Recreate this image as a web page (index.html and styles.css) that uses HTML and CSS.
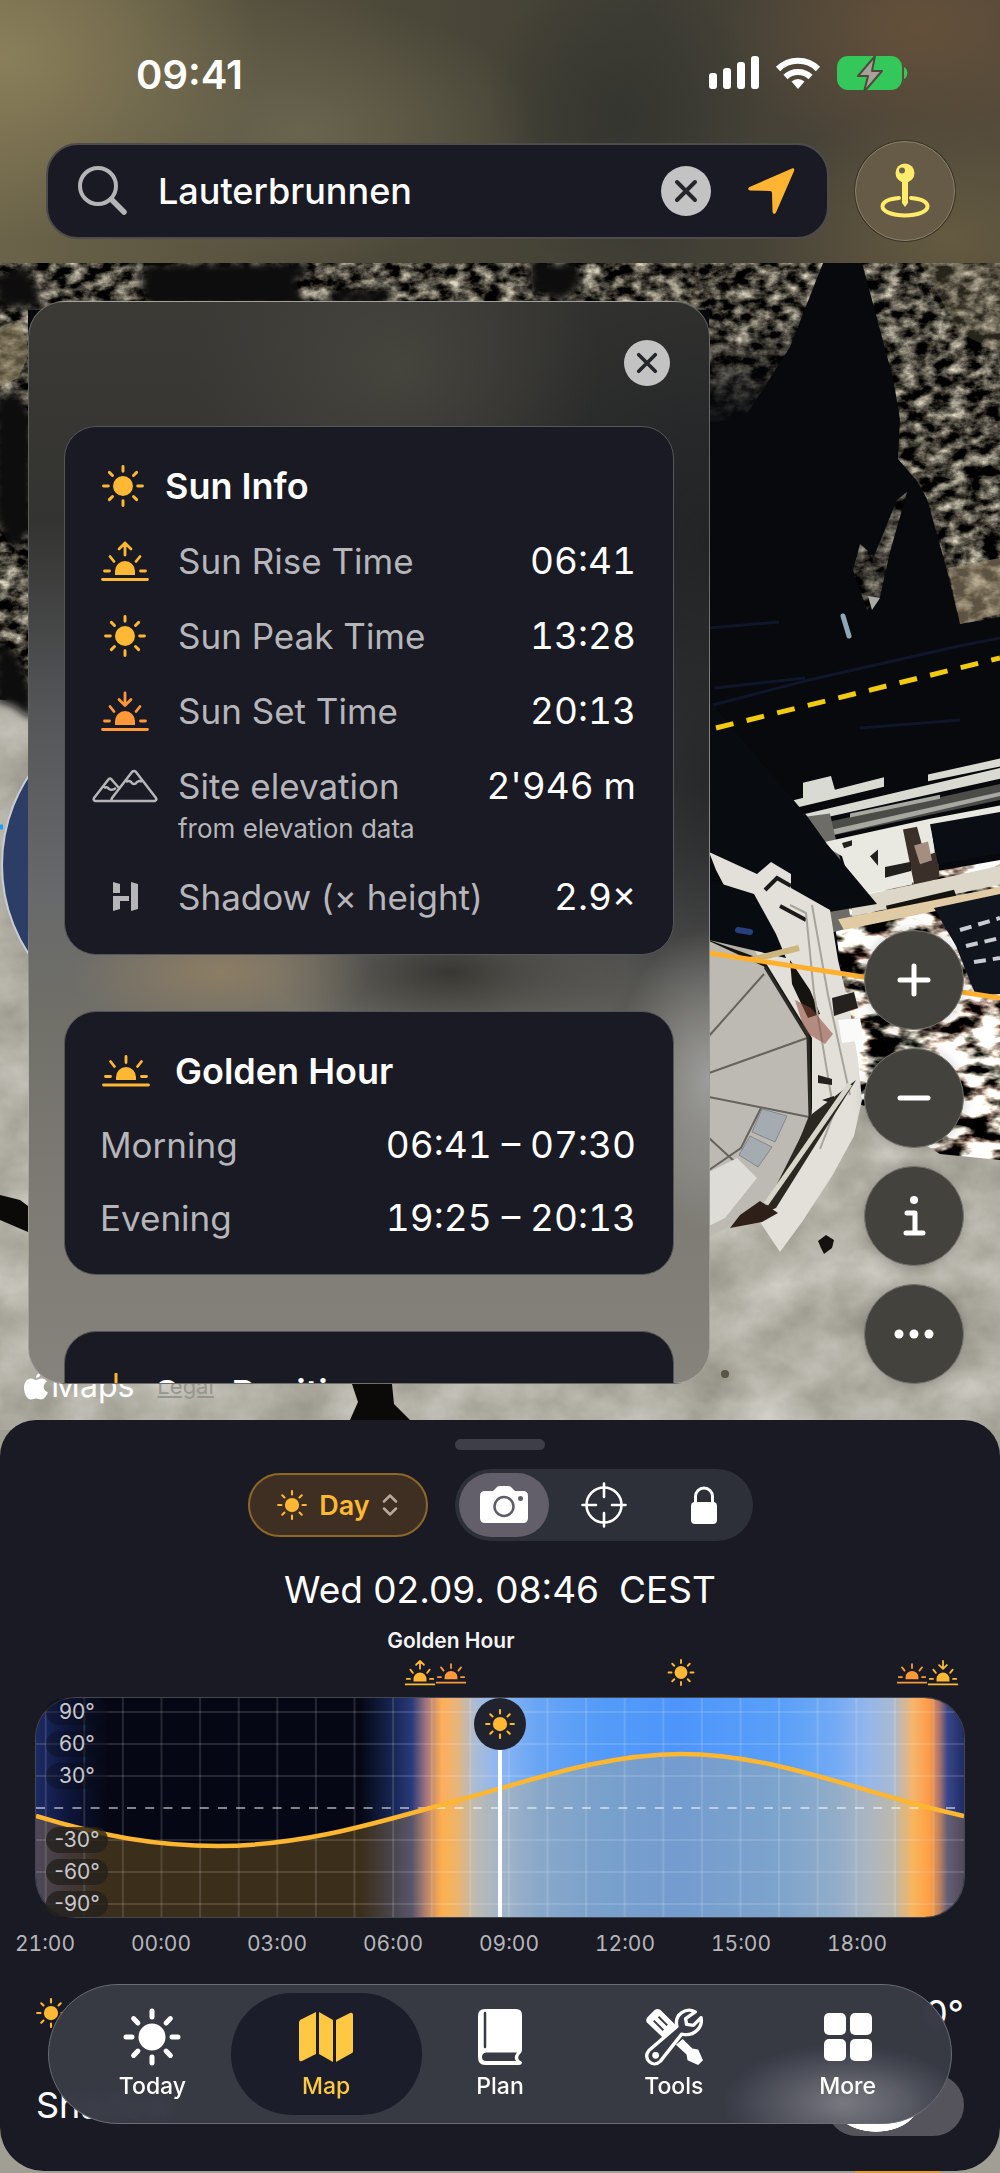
FILE: index.html
```html
<!DOCTYPE html>
<html lang="en">
<head>
    <meta charset="UTF-8">
    <meta name="viewport" content="width=device-width, initial-scale=1.0">
    <title>Sun Map</title>
    <link rel="stylesheet" href="styles.css">
</head>
<body>

    <!-- shared icons -->
    <svg class="defs" aria-hidden="true">
        <symbol id="sun" viewBox="0 0 40 40">
            <circle cx="20" cy="20" r="9.5" fill="currentColor"/>
            <path d="M20 1.5v4.5M20 34v4.5M1.5 20H6M34 20h4.5M7 7l3 3M30 30l3 3M33 7l-3 3M10 30l-3 3" stroke="currentColor" stroke-width="2.8" stroke-linecap="round"/>
        </symbol>
        <symbol id="golden" viewBox="0 0 48 32">
            <path d="M14 25v-3a10 10 0 0 1 20 0v3z" fill="currentColor"/>
            <path d="M1.5 30h45M24 1.5v6M8.5 6.5l4 5M39.5 6.5l-4 5M3.5 21.5h5M39.5 21.5h5" fill="none" stroke="currentColor" stroke-width="2.8" stroke-linecap="round"/>
        </symbol>
        <symbol id="sunrise" viewBox="0 0 48 40">
            <path d="M14 34v-4a10 10 0 0 1 20 0v4z" fill="currentColor"/>
            <path d="M1.5 38.5h45M24 14V2M18 8l6-6 6 6M9 15.5l4 5M39 15.5l-4 5M3.5 30h5M39.5 30h5" fill="none" stroke="currentColor" stroke-width="2.8" stroke-linecap="round" stroke-linejoin="round"/>
        </symbol>
        <symbol id="sunset" viewBox="0 0 48 40">
            <path d="M14 34v-4a10 10 0 0 1 20 0v4z" fill="currentColor"/>
            <path d="M1.5 38.5h45M24 2v12M18 8.5l6 6 6-6M9 15.5l4 5M39 15.5l-4 5M3.5 30h5M39.5 30h5" fill="none" stroke="currentColor" stroke-width="2.8" stroke-linecap="round" stroke-linejoin="round"/>
        </symbol>
    </svg>

    <div class="screen">

        <!-- satellite map -->
        <svg class="map" viewBox="0 0 1000 2173" preserveAspectRatio="xMidYMin slice" aria-hidden="true">
            <defs>
                <filter id="darkRock" x="0" y="0" width="100%" height="100%" color-interpolation-filters="sRGB">
                    <feTurbulence type="fractalNoise" baseFrequency="0.06 0.09" numOctaves="5" seed="4"/>
                    <feColorMatrix values="1.7 0 0 0 -0.57  1.65 0 0 0 -0.56  1.5 0 0 0 -0.52  0 0 0 0 1"/>
                    <feComposite in2="SourceGraphic" operator="in"/>
                </filter>
                <filter id="paleRock" x="0" y="0" width="100%" height="100%" color-interpolation-filters="sRGB">
                    <feTurbulence type="fractalNoise" baseFrequency="0.015 0.02" numOctaves="5" seed="9"/>
                    <feColorMatrix values="0.28 0 0 0 0.56  0.28 0 0 0 0.55  0.3 0 0 0 0.5  0 0 0 0 1"/>
                    <feComposite in2="SourceGraphic" operator="in"/>
                </filter>
                <filter id="debris" x="0" y="0" width="100%" height="100%" color-interpolation-filters="sRGB">
                    <feTurbulence type="fractalNoise" baseFrequency="0.03 0.06" numOctaves="4" seed="21"/>
                    <feColorMatrix values="5 0 0 0 -1.8  4.8 0.2 0 0 -1.85  4.6 0.2 0 0 -1.8  0 0 0 0 1"/>
                    <feComposite in2="SourceGraphic" operator="in"/>
                </filter>
                <filter id="soft" x="-20%" y="-20%" width="140%" height="140%"><feGaussianBlur stdDeviation="4"/></filter>
                <linearGradient id="fade" x1="0" y1="0" x2="0" y2="1"><stop offset="0" stop-color="#07090d" stop-opacity="0"/><stop offset="1" stop-color="#07090d"/></linearGradient>
            </defs>
            <rect width="1000" height="2173" fill="#a19f93"/>
            <rect y="690" width="1000" height="740" filter="url(#paleRock)"/>
            <path d="M0 263H1000V1040L860 1010 709 900V700H0z" fill="#07090d"/>
            <path d="M0 263H823l-33 84-43 67-38 10V310H28V700H0z" filter="url(#darkRock)"/>
            <path d="M709 320H830L790 430H709z" fill="url(#fade)"/>
            <g fill="#090b0f" filter="url(#soft)">
                <path d="M-5 275l30-8 12 20 6 20H-5zM145 263h170l-20 20 15 24H150l-10-20zM330 290h60v14h-60zM530 263h46l6 20-20 18-30-10zM-5 400l22-10 16 30v110l-20 20-18-30zM-5 640l20 10 18 40v30l-20-14-18-6z"/>
            </g>
            <path d="M0 330l20-8 10 30-12 26-18 8z" fill="#8d8060" opacity=".6"/>
            <path d="M862 263H1000V617l-40 7-13-54-20-71-10-18-19-22 2-40-7-41z" filter="url(#darkRock)"/>
            <path d="M897 500l10-8-17 60-10 45-13 13-14-40 7-26 14 12z" filter="url(#darkRock)" opacity=".8"/>
            <path d="M868 596l12 2-8 12z" fill="#a9aaa5"/>
            <path d="M948 568l52-10v56l-40 10z" fill="#a79878" opacity=".55"/>
            <path d="M920 263h80v90l-40-20z" fill="#9a8f70" opacity=".25"/>
            <path d="M0 1195l20 5 8 6v26l-28-12zM352 1384h40l2 20 16 16h-60l8-18z" fill="#0b0a08"/>
            <circle cx="164" cy="865" r="162" fill="#2c3d66" stroke="#c9ccd4" stroke-width="2"/>
            <path d="M0 827h3" stroke="#18a0ff" stroke-width="5"/>
            <path d="M843 616l6 20" stroke="#8fa6b4" stroke-width="5" stroke-linecap="round"/>
            <path d="M709 628l70-6M709 706l100-26 150-34 41-8M715 688l90-10M860 728l100-8" stroke="#10162a" stroke-width="3" fill="none"/>

            <!-- station buildings -->
            <path d="M830 890l170-30v300l-60-6-80-50z" filter="url(#debris)"/>
            <g transform="translate(0 -81) scale(1 1.339)">
                <path d="M803 645l28-5 6 16-34 5zM768 663l116-22v7L772 668zM928 639l72-12v6l-72 11zM790 671l210-37v8l-205 34z" fill="#d9dbd3"/>
                <path d="M806 678l194-32v12l-190 30z" fill="#4b4b48"/>
                <path d="M820 682l60-10 120-20v3l-178 31zM850 668l90-14v3l-90 14z" fill="#a8a8a2"/>
                <path d="M790 672l40-4 12 40 10 45-20 4-14-30z" fill="#6d6c66"/>
                <path d="M820 690l110-18 70-10v8l-68 12 5 26-25 7v6l-58 9-12-30z" fill="#e9e8e1"/>
                <path d="M903 680l14-2 8 22 14-4v20l-24 8z" fill="#3b2f2a"/>
                <path d="M914 692l14-3 4 14-12 3z" fill="#a58d80"/>
                <path d="M885 708l26-4v7l-26 5zM870 700l8-5v12zM842 690l10-2v4l-8 2z" fill="#22201d"/>
                <path d="M930 676l70-9v31l-62 8z" fill="#0a0d14"/>
                <path d="M852 731l148-24v14l-148 24z" fill="#dcd7c8"/>
                <path d="M886 737l68-12 4 8-70 10z" fill="#15130f"/>
                <path d="M838 747l162-24v8l-156 24z" fill="#e0cba4"/>
            </g>
            <path d="M934 908l66-14v100l-24 2-20-50z" fill="#10141c"/>
            <path d="M960 930l40-12M966 946l34-8M974 962l26-4" stroke="#c9cdd2" stroke-width="4" stroke-dasharray="12 7"/>
            <path d="M709 700v160l48 24 60 30 60-10-50-60-20-28z" fill="#080b10"/>
            <path d="M709 852l48 22 14-12 20 12v14l39 22 8 50 12 50 8 50 4 40-8 36-22 40-30 46-22 30-20-30 40-110-4-80-34-66-22-50-24-46z" fill="#e2e0d9"/>
            <path d="M765 890l12-12 14 8M780 906l26 14" stroke="#1c1a18" stroke-width="4" fill="none"/>
            <path d="M709 880l45 14 22 40 10 24-77-18z" fill="#080b10"/>
            <path d="M738 930l12 2" stroke="#26407c" stroke-width="6" stroke-linecap="round"/>
            <path d="M709 940l55 20 48 78v80l-8-80-50-72-45-20zM790 960l20 30 10 24-12 4-16-34z" fill="#16140f"/>
            <path d="M790 905l16 8 8 80 20 120-14 36M812 905l16 90 22 100" stroke="#a7a49b" stroke-width="2" fill="none"/>
            <path d="M832 998l22-6 4 16-24 8zM818 1075l14 4v6l-14-2zM822 1100l12-4v8z" fill="#24211e"/>
            <path d="M838 1020l22-2 4 22-22 3z" fill="#fafaf8"/>
            <path d="M795 1000l16 8 22 26-8 10-20-12z" fill="#8e4638" opacity=".55"/>
            <path d="M709 970l90-22" stroke="#cdb67c" stroke-width="6"/>

            <!-- dome -->
            <path d="M709 941l56 26 43 70 3 80-33 84-69 36z" fill="#bcbab3"/>
            <path d="M709 1036l55-62M709 1073l98-35M709 1097l100 20M709 1138l26 24M709 1170l32-22 20-40" stroke="#65635c" stroke-width="2" fill="none"/>
            <path d="M765 967l43 70 2 80-33 84" stroke="#2c2a26" stroke-width="3" fill="none"/>
            <path d="M762 1109l25 7-12 26-23-10zM750 1136l22 11-14 20-19-12z" fill="#a4acb2" stroke="#84868a"/>
            <path d="M709 1172l28-14 20 20-32 40-16 8z" fill="#dddcd6"/>
            <path d="M856 1080l-80 128-14 6 50-100z" fill="#2b2822"/>
            <path d="M850 1084l-84 120" stroke="#d8d5ca" stroke-width="5"/>
            <path d="M740 1215l20-14 18 12-16 9-32 6z" fill="#2f1f19"/>
            <path d="M818 1241l8-6 8 5-2 8-8 6-3-6z" fill="#14110f"/>
            <circle cx="725" cy="1374" r="4" fill="#5b5344"/>

            <!-- sun azimuth lines -->
            <path d="M716 728L1000 658" stroke="#f0cb10" stroke-width="5" stroke-dasharray="18 13.5"/>
            <path d="M709 953L1000 998" stroke="#ffb02e" stroke-width="5"/>
            <path d="M855 2172h85" stroke="#e0a031" stroke-width="3"/>
        </svg>

        <header class="topbar">
            <div class="status">
                <span class="clock">09:41</span>
                <div class="status-icons">
                    <svg width="50" height="34" viewBox="0 0 50 34" fill="#fff" aria-hidden="true">
                        <rect x="0" y="17" width="8" height="16" rx="3"/><rect x="14" y="12" width="8" height="21" rx="3"/><rect x="28" y="6" width="8" height="27" rx="3"/><rect x="42" y="0" width="8" height="33" rx="3"/>
                    </svg>
                    <svg width="46" height="34" viewBox="0 0 46 34" aria-hidden="true">
                        <path d="M3 13a28.5 28.5 0 0 1 40 0M10.5 21a18 18 0 0 1 25 0" fill="none" stroke="#fff" stroke-width="6"/>
                        <path d="M23 33l-6.5-7.5a9.5 9.5 0 0 1 13 0z" fill="#fff"/>
                    </svg>
                    <svg width="72" height="36" viewBox="0 0 72 36" aria-hidden="true">
                        <rect width="65" height="34" rx="11" fill="#34c759"/>
                        <path d="M67 11a7 7 0 0 1 0 12z" fill="#34c759"/>
                        <path d="M38 0L21 20h10l-4 16 18-21H35z" fill="#a6a298" stroke="#4d4a3c" stroke-width="2" stroke-linejoin="round"/>
                    </svg>
                </div>
            </div>
            <div class="search-row">
                <form class="search" role="search">
                    <svg width="50" height="50" viewBox="0 0 50 50" fill="none" stroke="#b4b4b8" stroke-linecap="round" aria-hidden="true">
                        <circle cx="20" cy="20" r="18" stroke-width="4"/><path d="M33.5 33.5L46 46" stroke-width="5.5"/>
                    </svg>
                    <input type="text" aria-label="Search place" value="Lauterbrunnen">
                    <button type="button" class="clear" aria-label="Clear">
                        <svg viewBox="0 0 50 50"><path d="M16 16l18 18M34 16L16 34"/></svg>
                    </button>
                    <button type="button" class="locate" aria-label="My location">
                        <svg width="50" height="50" viewBox="0 0 50 50"><path d="M46 2.5q3-1 2 2.5L30 46.5q-2 3-3.5-.5L26 27q0-2-2-2L4 24.5q-3.5-1-.5-3.5z" fill="#ffb532"/></svg>
                    </button>
                </form>
                <button type="button" class="pin" aria-label="Drop pin">
                    <svg width="50" height="56" viewBox="0 0 50 56" fill="none">
                        <path d="M19 35C9 36 2.5 39 2.5 43.5c0 5 10 9 22.5 9s22.5-4 22.5-9C47.5 39 41 36 31 35" stroke="#ffec6a" stroke-width="4" stroke-linecap="round"/>
                        <path d="M25 14l3 4v22l-3 4-3-4V18z" fill="#ffec6a"/>
                        <circle cx="25" cy="10" r="9.5" fill="#ffec6a"/><circle cx="22" cy="7.5" r="3" fill="#6d624b"/>
                    </svg>
                </button>
            </div>
        </header>

        <main class="stage">
            <p class="credit">
                <svg width="24" height="28" viewBox="0 0 24 28" fill="#fff" aria-hidden="true"><path d="M17 0c0 3-2 6-5 6 0-3 2-5 5-6zM12 8c2 0 3-1.5 6-1.5 2 0 4 1 5 3-5 3-4 9 1 11-2 4-4 7-7 7-2 0-3-1-5-1s-3 1-5 1c-4 0-7-6-7-12 0-5 3-9 7-9 2 0 3 1.500 5 1.500z"/></svg>
                <span>Maps</span>
                <a href="#">Legal</a>
            </p>

            <aside class="panel">
                <button type="button" class="clear close" aria-label="Close">
                    <svg viewBox="0 0 50 50"><path d="M16 16l18 18M34 16L16 34"/></svg>
                </button>

                <section class="card">
                    <h2><svg class="i-sun"><use href="#sun"/></svg>Sun Info</h2>
                    <div class="row"><span class="ico"><svg class="i-rise"><use href="#sunrise"/></svg></span><span>Sun Rise Time</span><b>06:41</b></div>
                    <div class="row"><span class="ico"><svg class="i-sun"><use href="#sun"/></svg></span><span>Sun Peak Time</span><b>13:28</b></div>
                    <div class="row"><span class="ico orange"><svg class="i-rise"><use href="#sunset"/></svg></span><span>Sun Set Time</span><b>20:13</b></div>
                    <div class="row">
                        <span class="ico grey"><svg width="66" height="34" viewBox="0 0 66 34" fill="none" stroke="currentColor" stroke-width="2.5" stroke-linejoin="round"><path d="M20 32H3q-2-1-1-3L16 11q2-3 4 0l7 8M20 32q-1-1 0-3L40 3q2-2 4 0l20 26q1 2-1 3H20M12 19q3-2 5 1 3 2 7-1M34 13q3-2 5 0 3 4 6 0 3-2 5 0"/></svg></span>
                        <span>Site elevation</span><b>2'946 m</b>
                    </div>
                    <small class="note">from elevation data</small>
                    <div class="row">
                        <span class="ico grey"><svg width="25" height="29" viewBox="0 0 25 29" fill="currentColor"><path d="M0 0l7 2v9H0zM0 14h16v5H7v8l-7 2zM18 0l7 2v25l-7 2z"/></svg></span>
                        <span>Shadow (× height)</span><b>2.9×</b>
                    </div>
                </section>

                <section class="card compact">
                    <h2><svg class="i-golden"><use href="#golden"/></svg>Golden Hour</h2>
                    <div class="row"><span>Morning</span><b>06:41 – 07:30</b></div>
                    <div class="row"><span>Evening</span><b>19:25 – 20:13</b></div>
                </section>

                <section class="card tall">
                    <h2><svg width="32" height="40" viewBox="0 0 32 40" aria-hidden="true"><path d="M14 1v26M6 34h16" stroke="currentColor" stroke-width="3" stroke-linecap="round"/></svg>Sun Position</h2>
                </section>
            </aside>

            <div class="map-tools">
                <button type="button" aria-label="Zoom in"><svg viewBox="0 0 40 40"><path d="M20 6v28M6 20h28"/></svg></button>
                <button type="button" aria-label="Zoom out"><svg viewBox="0 0 40 40"><path d="M6 20h28"/></svg></button>
                <button type="button" aria-label="Information"><svg viewBox="0 0 40 40"><circle cx="20" cy="4" r="4" class="dot"/><path d="M13 17h8v20M12 37h17"/></svg></button>
                <button type="button" aria-label="More options"><svg viewBox="0 0 40 40"><g class="dot"><circle cx="5" cy="20" r="4.5"/><circle cx="20" cy="20" r="4.5"/><circle cx="35" cy="20" r="4.5"/></g></svg></button>
            </div>
        </main>

        <section class="sheet">
            <div class="handle"></div>

            <div class="modes">
                <button type="button" class="day">
                    <svg width="30" height="30"><use href="#sun"/></svg>
                    Day
                    <svg width="16" height="22" viewBox="0 0 16 22" fill="none" stroke="#b7aa9c" stroke-width="2.5" stroke-linecap="round" stroke-linejoin="round"><path d="M2 7.5l6-6 6 6M2 14.5l6 6 6-6"/></svg>
                </button>
                <div class="segments">
                    <button type="button" class="active" aria-label="Camera">
                        <svg width="48" height="38" viewBox="0 0 48 38"><path d="M5 5h8l4-4q1-1 3-1h8q2 0 3 1l4 4h8q5 0 5 5v22q0 5-5 5H5q-5 0-5-5V10q0-5 5-5z" fill="#fff"/><circle cx="24" cy="20.5" r="9.5" fill="none" stroke="#5e5c66" stroke-width="2.5"/><circle cx="40.5" cy="12.5" r="2.5" fill="#5e5c66"/></svg>
                    </button>
                    <button type="button" aria-label="Center">
                        <svg width="46" height="46" viewBox="0 0 46 46" fill="none" stroke="#fff" stroke-width="2.6" stroke-linecap="round"><circle cx="23" cy="23" r="17.5"/><path d="M23 1.5V15M23 31v13.5M1.5 23H15M31 23h13.5"/></svg>
                    </button>
                    <button type="button" aria-label="Lock">
                        <svg width="26" height="38" viewBox="0 0 26 38"><path d="M4.5 18v-7.5a8.5 8.5 0 0 1 17 0V18" fill="none" stroke="#fff" stroke-width="3"/><rect y="16" width="26" height="22" rx="4" fill="#fff"/></svg>
                    </button>
                </div>
            </div>

            <p class="date"><span>Wed 02.09. 08:46</span> <span>CEST</span></p>

            <div class="events">
                <span class="event-name" style="left: 44.7%">Golden Hour</span>
                <svg class="event tall" style="left: 41.4%"><use href="#sunrise"/></svg>
                <svg class="event orange" style="left: 44.7%"><use href="#golden"/></svg>
                <svg class="event tall" style="left: 69.5%"><use href="#sun"/></svg>
                <svg class="event orange" style="left: 94.4%"><use href="#golden"/></svg>
                <svg class="event tall" style="left: 97.7%"><use href="#sunset"/></svg>
            </div>

            <div class="chart">
                <svg class="plot" viewBox="0 0 928 219" preserveAspectRatio="none" role="img" aria-label="Sun elevation over the day">
                    <defs>
                        <linearGradient id="sky">
                            <stop offset="0" stop-color="#1c2b66"/><stop offset=".035" stop-color="#0e153a"/><stop offset=".075" stop-color="#050814"/>
                            <stop offset=".35" stop-color="#050814"/><stop offset=".385" stop-color="#172654"/><stop offset=".405" stop-color="#293a7a"/>
                            <stop offset=".42" stop-color="#a0747e"/><stop offset=".437" stop-color="#ffae57"/><stop offset=".453" stop-color="#e9b47a"/>
                            <stop offset=".474" stop-color="#a9bcd8"/><stop offset=".5" stop-color="#8bb6f3"/><stop offset=".54" stop-color="#69a5f4"/>
                            <stop offset=".61" stop-color="#549bf8"/><stop offset=".69" stop-color="#4d95fb"/><stop offset=".8" stop-color="#599ff8"/>
                            <stop offset=".86" stop-color="#72aaf4"/><stop offset=".895" stop-color="#93b6eb"/><stop offset=".924" stop-color="#a9bad0"/>
                            <stop offset=".945" stop-color="#f6b56b"/><stop offset=".963" stop-color="#ff9947"/><stop offset=".974" stop-color="#a6726f"/>
                            <stop offset=".982" stop-color="#39468a"/><stop offset="1" stop-color="#1f2c64"/>
                        </linearGradient>
                        <pattern id="hours" x="8.7" width="38.6" height="219" patternUnits="userSpaceOnUse"><path d="M1 0v219" stroke="#fff" stroke-opacity=".13" stroke-width="2"/></pattern>
                    </defs>
                    <rect width="928" height="219" fill="url(#sky)"/>
                    <path d="M0 118C65 138 120 148 182 148 260 148 330 128 394 110 480 88 560 56 646 56 730 56 810 88 894 110L928 118V219H0z" fill="#ffb833" fill-opacity=".22"/>
                    <rect width="928" height="219" fill="url(#hours)"/>
                    <path d="M0 14h928M0 46h928M0 78h928M0 142h928M0 174h928M0 206h928" stroke="#fff" stroke-opacity=".13" stroke-width="2"/>
                    <path d="M0 110h928" stroke="#fff" stroke-opacity=".5" stroke-width="2" stroke-dasharray="9 9.2"/>
                    <path d="M0 118C65 138 120 148 182 148 260 148 330 128 394 110 480 88 560 56 646 56 730 56 810 88 894 110L928 118" fill="none" stroke="#fdb62f" stroke-width="4.5"/>
                </svg>
                <ul class="degrees">
                    <li>90°</li><li>60°</li><li>30°</li>
                    <li class="below">-30°</li><li class="below">-60°</li><li class="below">-90°</li>
                </ul>
                <div class="marker"><span><svg width="30" height="30"><use href="#sun"/></svg></span></div>
            </div>

            <div class="hours">
                <span>21:00</span><span>00:00</span><span>03:00</span><span>06:00</span><span>09:00</span><span>12:00</span><span>15:00</span><span>18:00</span>
            </div>

            <div class="setting"><svg width="30" height="30"><use href="#sun"/></svg><span>0°</span></div>
            <label class="setting"><span>Shadow</span><input type="checkbox"></label>
        </section>

        <nav class="tabs">
            <a href="#">
                <svg viewBox="0 0 58 58"><circle cx="29" cy="29" r="13.5" fill="#fff"/><path d="M29 3v6M29 49v6M3 29h6M49 29h6M10.6 10.6l4.3 4.3M43.1 43.1l4.3 4.3M47.4 10.6l-4.3 4.3M14.9 43.1l-4.3 4.3" stroke="#fff" stroke-width="5" stroke-linecap="round"/></svg>
                Today
            </a>
            <a href="#" class="active">
                <svg viewBox="0 0 58 58" fill="#ffc842"><path d="M3 12L19 4v42L5 53q-3 1-3-2V14zM22 4l14 8v42l-14-8zM39 12l14-7q3-1 3 2v36q0 2-1 2L39 54z"/></svg>
                Map
            </a>
            <a href="#">
                <svg viewBox="0 0 58 58"><path d="M14 1h31q6 0 6 6v35q0 2-2 4-3 3-1 6l3 2q0 3-3 3H14q-7 0-7-8V8q0-7 7-7z" fill="#fff"/><path d="M14 5v34" stroke="#383a45" stroke-width="2.5" stroke-linecap="round"/><path d="M15 44.5h31q-4 5-1 8.5H15q-4 0-4-4t4-4.5z" fill="#383a45"/></svg>
                Plan
            </a>
            <a href="#">
                <svg viewBox="0 0 60 60"><path d="M3 9l7-7q3-2 6 0l17 17-13 13L2 15q-2-3 1-6z" fill="#fff"/><path d="M9 13l10 10M14 9l9 9" stroke="#383a45" stroke-width="2"/><path d="M32 38l7-6 10 10 6 1 5 11-5 5-11-5-1-6z" fill="#fff"/><path d="M52 4c-9-5-22 2-19 15L4 44c-7 8 4 19 12 11l22-28c13 3 22-7 20-17l-8 8-7-1-1-6z" fill="#383a45" stroke="#fff" stroke-width="3.5" stroke-linejoin="round"/><circle cx="11" cy="49" r="3.5" fill="#fff"/></svg>
                Tools
            </a>
            <a href="#">
                <svg viewBox="0 0 58 58" fill="#fff"><rect x="5" y="5" width="22" height="22" rx="5"/><rect x="31" y="5" width="22" height="22" rx="5"/><rect x="5" y="31" width="22" height="22" rx="5"/><rect x="31" y="31" width="22" height="22" rx="5"/></svg>
                More
            </a>
        </nav>
    </div>

</body>
</html>
```

FILE: styles.css
```css
* {
    box-sizing: border-box;
}
body {
    margin: 0;
    font-family: Inter, "Liberation Sans", sans-serif;
    background: #8f8d82;
    color: #fff;
}
button {
    padding: 0;
    border: none;
    background: none;
    color: inherit;
    font-family: inherit;
    cursor: pointer;
}
svg {
    display: block;
    flex: none;
}
.defs {
    position: absolute;
    width: 0;
    height: 0;
}
.screen {
    position: relative;
    display: flex;
    flex-direction: column;
    height: 100vh;
    min-height: 1500px;
    overflow: hidden;
}
.map {
    position: absolute;
    top: 0;
    left: 0;
    width: 100%;
    height: 100%;
}

/* top bar */
.topbar {
    position: relative;
    padding: 50px 45px 22px 46px;
    background:
        radial-gradient(ellipse 26% 70% at 0% 22%, #8a7f5a, transparent),
        radial-gradient(ellipse 24% 50% at 30% 50%, #69644e, transparent),
        radial-gradient(ellipse 14% 60% at 62% 45%, #34352f, transparent),
        radial-gradient(ellipse 20% 50% at 92% 10%, #64503a, transparent),
        radial-gradient(ellipse 20% 50% at 95% 90%, #645a41, transparent),
        linear-gradient(90deg, #6b6349, #4c4839 40%, #403e35 65%, #50483a);
}
.status {
    display: flex;
    align-items: center;
    justify-content: space-between;
    height: 48px;
    padding: 0 46px 0 90px;
    margin-bottom: 43px;
}
.clock {
    font-size: 40px;
    font-weight: 600;
}
.status-icons {
    display: flex;
    gap: 16px;
}
.search-row {
    display: flex;
    align-items: center;
    gap: 26px;
}
.search {
    flex: 1;
    min-width: 0;
    display: flex;
    align-items: center;
    height: 96px;
    padding: 0 31px 0 30px;
    background: #191a24;
    border: 2px solid #4d4c4b;
    border-radius: 32px;
}
.search input {
    flex: 1;
    min-width: 0;
    margin-left: 30px;
    padding: 0;
    border: none;
    outline: none;
    background: none;
    color: #fff;
    font: 500 36px Inter, sans-serif;
}
.clear {
    flex: none;
    width: 50px;
    height: 50px;
    border-radius: 50%;
    background: #c3c3c3;
}
.clear path {
    stroke: #25262c;
    stroke-width: 4;
    stroke-linecap: round;
}
.locate {
    margin-left: 35px;
}
.pin {
    flex: none;
    display: flex;
    align-items: center;
    justify-content: center;
    width: 100px;
    height: 100px;
    border: 1px solid #8b8269;
    border-radius: 50%;
    background: #665b47;
    box-shadow: 0 0 0 1px #3a352a;
}

/* map area */
.stage {
    position: relative;
    flex: 1;
    min-height: 0;
    display: flex;
    justify-content: space-between;
    align-items: flex-end;
    padding: 38px 36px 36px 28px;
}
.credit {
    position: absolute;
    left: 24px;
    bottom: 16px;
    display: flex;
    align-items: center;
    gap: 3px;
    margin: 0;
    font-size: 32px;
    line-height: 36px;
}
.credit a {
    margin-left: 20px;
    color: #96958e;
    font-size: 22px;
}
.panel {
    position: relative;
    display: flex;
    flex-direction: column;
    gap: 56px;
    width: 73%;
    max-width: 682px;
    height: 100%;
    padding: 38px 35px 0;
    overflow: hidden;
    border: 1px solid rgba(255, 255, 255, 0.25);
    border-radius: 36px;
    background:
        radial-gradient(ellipse 22% 6% at 28% 62%, #8c7d63, transparent),
        radial-gradient(ellipse 26% 7% at 62% 62%, #393732, transparent),
        radial-gradient(ellipse 14% 14% at 100% 72%, #9d9d9b, transparent),
        radial-gradient(ellipse 30% 16% at 54% 6%, #45443d, transparent),
        radial-gradient(ellipse 60% 40% at 100% 22%, #222426, transparent),
        radial-gradient(ellipse 36% 36% at 100% 44%, #2c2c2c, transparent),
        linear-gradient(180deg, #3b3a35 0%, #333331 20%, #555658 38%, #68696a 55%, #706f68 66%, #7b7972 80%, #85837b 100%);
}
.close {
    align-self: flex-end;
    width: 46px;
    height: 46px;
    margin: 0 4px -16px 0;
}
.card {
    flex: none;
    padding: 21px 37px 20px 27px;
    background: #191a24;
    border: 1px solid #55565a;
    border-radius: 32px;
    color: #ffb833;
}
.card h2 {
    display: flex;
    align-items: center;
    gap: 21px;
    height: 75px;
    margin: 0 0 0 10px;
    font-size: 36px;
    font-weight: 600;
    color: #fff;
}
.compact h2 {
    gap: 25px;
}
.card.tall h2 {
    height: 80px;
}
.card h2 svg {
    color: #ffb833;
}
.row {
    display: flex;
    align-items: center;
    height: 75px;
    font-size: 35px;
    color: #b6b6ba;
}
.row b {
    margin-left: auto;
    font-size: 37px;
    font-weight: 400;
    font-variant-numeric: tabular-nums;
    color: #fff;
}
.ico {
    display: flex;
    justify-content: center;
    width: 66px;
    margin-right: 20px;
    color: #ffb833;
}
.orange {
    color: #ff9838;
}
.grey {
    color: #b6b6ba;
}
.note {
    display: block;
    margin: -9px 0 15px 86px;
    font-size: 26px;
    line-height: 30px;
    color: #b6b6ba;
}
.compact .row {
    height: 73px;
    padding-left: 8px;
}
.i-sun {
    width: 42px;
    height: 42px;
}
.i-rise {
    width: 48px;
    height: 40px;
}
.i-golden {
    width: 48px;
    height: 32px;
}
.map-tools {
    position: relative;
    display: flex;
    flex-direction: column;
    gap: 18px;
}
.map-tools button {
    display: flex;
    align-items: center;
    justify-content: center;
    width: 100px;
    height: 100px;
    border: 1px solid #75746e;
    border-radius: 50%;
    background: #43423d;
    box-shadow: 0 0 12px rgba(0, 0, 0, 0.2);
}
.map-tools svg {
    width: 40px;
    height: 40px;
    overflow: visible;
    fill: none;
    stroke: #fff;
    stroke-width: 5;
    stroke-linecap: round;
    stroke-linejoin: round;
}
.map-tools .dot {
    fill: #fff;
    stroke: none;
}

/* bottom sheet */
.sheet {
    position: relative;
    margin-bottom: 2px;
    padding: 19px 36px 35px;
    background: #191a24;
    border-radius: 36px 36px 44px 44px;
}
.handle {
    width: 90px;
    height: 11px;
    margin: 0 auto 19px;
    border-radius: 6px;
    background: #3d3e47;
}
.modes {
    display: flex;
    align-items: center;
    justify-content: center;
    gap: 27px;
}
.day {
    display: flex;
    align-items: center;
    justify-content: center;
    gap: 12px;
    width: 180px;
    height: 64px;
    border: 2px solid #8d6727;
    border-radius: 32px;
    background: #3e2f22;
    color: #ffb833;
    font-size: 27px;
    font-weight: 600;
}
.segments {
    display: flex;
    gap: 10px;
    height: 72px;
    padding: 4px;
    border-radius: 36px;
    background: #2d2f39;
}
.segments button {
    display: flex;
    align-items: center;
    justify-content: center;
    width: 90px;
    height: 64px;
    border-radius: 32px;
}
.segments .active {
    background: #625f6b;
}
.date {
    display: flex;
    justify-content: center;
    gap: 20px;
    margin: 24px 0 14px;
    font-size: 37px;
    line-height: 50px;
}
.events {
    position: relative;
    height: 69px;
    color: #ffb833;
}
.event-name {
    position: absolute;
    top: 0;
    transform: translateX(-50%);
    color: #f4f4f6;
    font-size: 21px;
    font-weight: 600;
    line-height: 24px;
    white-space: nowrap;
}
.event {
    position: absolute;
    bottom: 14px;
    width: 31px;
    height: 21px;
    transform: translateX(-50%);
}
.event.tall {
    bottom: 12px;
    height: 27px;
}
.chart {
    position: relative;
    height: 219px;
    border-radius: 40px;
}
.plot {
    width: 100%;
    height: 100%;
    border-radius: 40px;
    box-shadow: 0 0 0 1px #45474f;
}
.degrees {
    position: absolute;
    top: 0;
    left: 10px;
    display: flex;
    flex-direction: column;
    gap: 6px;
    width: 62px;
    margin: 0;
    padding: 1px 0;
    list-style: none;
    color: #c8c8cc;
    font-size: 21px;
    line-height: 26px;
    text-align: center;
}
.degrees li {
    border-radius: 13px;
    background: rgba(10, 13, 24, 0.4);
}
.degrees li:nth-child(4) {
    margin-top: 32px;
}
.degrees .below {
    background: rgba(36, 32, 28, 0.8);
}
.marker {
    position: absolute;
    top: 0;
    bottom: 0;
    left: 50%;
    width: 4px;
    margin-left: -2px;
    background: #fff;
}
.marker span {
    display: flex;
    align-items: center;
    justify-content: center;
    width: 52px;
    height: 52px;
    margin-left: -24px;
    border-radius: 50%;
    background: #20222d;
    color: #ffb833;
}
.hours {
    display: grid;
    grid-template-columns: repeat(8, 1fr);
    margin: 15px 49px 27px -49px;
    color: #b6b6ba;
    font-size: 21px;
    font-variant-numeric: tabular-nums;
    line-height: 24px;
    text-align: center;
}
.setting {
    display: flex;
    align-items: center;
    justify-content: space-between;
    height: 60px;
    margin-bottom: 31px;
    font-size: 36px;
}
.setting svg {
    color: #ffb833;
}
.setting:last-child {
    height: 62px;
    margin-bottom: 0;
}
.setting input {
    appearance: none;
    width: 138px;
    height: 62px;
    margin: 0;
    border-radius: 31px;
    background: radial-gradient(ellipse 42px 27px at 50px 31px, #fff 98%, transparent) #55545d;
}

/* tab bar floats over the sheet */
.tabs {
    position: absolute;
    left: 48px;
    right: 48px;
    bottom: 49px;
    display: flex;
    justify-content: space-between;
    height: 140px;
    padding: 8px;
    border: 1px solid #696b75;
    border-radius: 70px;
    background: radial-gradient(ellipse 120px 60px at 88% 86%, rgba(125, 126, 134, 0.9), transparent), rgba(56, 58, 69, 0.96);
    backdrop-filter: blur(6px);
}
.tabs a {
    display: flex;
    flex-direction: column;
    align-items: center;
    justify-content: center;
    gap: 6px;
    width: 191px;
    margin-right: -17px;
    border-radius: 61px;
    color: #fff;
    font-size: 23px;
    font-weight: 500;
    line-height: 28px;
    text-decoration: none;
}
.tabs a:last-child {
    margin-right: 0;
}
.tabs svg {
    width: 58px;
    height: 58px;
}
.tabs .active {
    background: #1b1e2a;
    color: #ffc842;
}
```
